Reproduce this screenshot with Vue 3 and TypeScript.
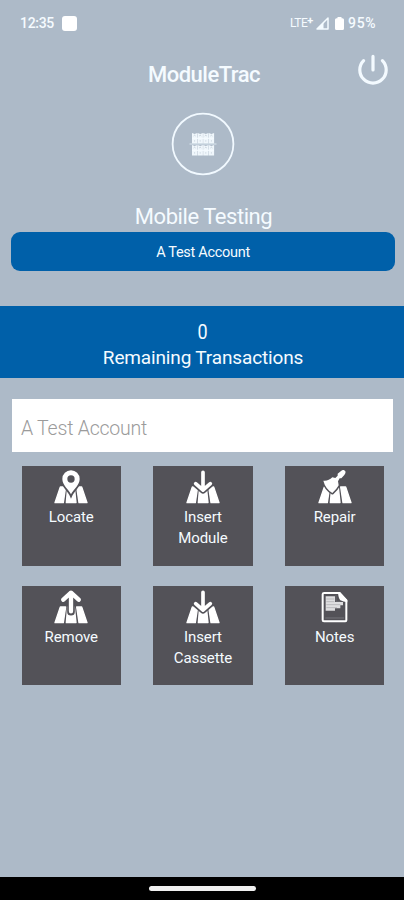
<script setup lang="ts">
type IconName = 'locate' | 'insert' | 'repair' | 'remove' | 'notes'

interface Tile {
  lines: string[]
  icon: IconName
}

const tiles: Tile[] = [
  { lines: ['Locate'], icon: 'locate' },
  { lines: ['Insert', 'Module'], icon: 'insert' },
  { lines: ['Repair'], icon: 'repair' },
  { lines: ['Remove'], icon: 'remove' },
  { lines: ['Insert', 'Cassette'], icon: 'insert' },
  { lines: ['Notes'], icon: 'notes' },
]

const rows: number[] = [0, 1]
const columns: number[] = [0, 1, 2, 3]
</script>

<template>
  <div class="screen">
    <header class="status">
      <span class="clock">12:35</span>
      <span class="square"></span>
      <span class="spacer"></span>
      <span class="lte">LTE<sup>+</sup></span>
      <svg class="signal" width="13" height="13" viewBox="0 0 13 13">
        <path d="M1 12 12 1V12Z" fill="none" stroke="#f4fbff" stroke-width="1.5" stroke-linejoin="round" />
        <path d="M1 12 7.5 5.5V12Z" fill="#f4fbff" />
      </svg>
      <svg class="battery" width="9" height="13" viewBox="0 0 9 13">
        <path d="M2.5 0H6.5V1.2H7.5Q9 1.2 9 2.7V11.5Q9 13 7.5 13H1.5Q0 13 0 11.5V2.7Q0 1.2 1.5 1.2H2.5Z" fill="#fff" />
      </svg>
      <span class="percent">95%</span>
    </header>

    <div class="titlebar">
      <h1>ModuleTrac</h1>
      <svg class="power" width="32" height="32" viewBox="0 0 32 32">
        <path d="M6.6 6.6A13.2 13.2 0 1 0 25.4 6.6M16 2.4V16" fill="none" stroke="#f3faff" stroke-width="3.2" stroke-linecap="round" />
      </svg>
    </div>

    <svg class="logo" width="64" height="64" viewBox="0 0 64 64">
      <circle cx="32" cy="32" r="30.4" fill="none" stroke="#f1f9ff" stroke-width="1.8" />
      <g v-for="r in rows" :key="r">
        <g v-for="c in columns" :key="c" :transform="`translate(${21 + c * 5.6} ${21 + r * 12})`">
          <path d="M0 0 2.6 1 5.3 0V10.4H0Z" fill="#f0f7fc" />
          <path d="M1.6 3 2.6 2.2 3.6 3" fill="none" stroke="#adbac8" stroke-width=".6" />
          <path d="M2.6 7.2V8.6" fill="none" stroke="#adbac8" stroke-width=".5" />
        </g>
        <path :d="`M21 ${26.3 + r * 12}H43`" stroke="#f5fbff" stroke-width="1.2" />
      </g>
      <path d="M18.5 32H45.5" stroke="#dae6ef" stroke-width="1" />
    </svg>

    <h2>Mobile Testing</h2>
    <button class="account">A Test Account</button>

    <section class="remaining">
      <span class="count">0</span>
      <span class="caption">Remaining Transactions</span>
    </section>

    <div class="field">A Test Account</div>

    <main class="grid">
      <button v-for="(tile, index) in tiles" :key="index" class="tile">
        <svg class="icon" width="34" height="34" viewBox="0 0 102 102">
          <g v-if="tile.icon !== 'notes'" fill="#fff" stroke="#fff" stroke-width="4" stroke-linejoin="round">
            <path d="M19 51H35L28 98H3Z" />
            <path d="M41 51H61L66 98H37Z" />
            <path d="M68 51H83L99 98H75Z" />
          </g>
          <g v-if="tile.icon === 'locate'">
            <path d="M51 73C44 58 25 46 25 27A26 26 0 0 1 77 27C77 46 58 58 51 73Z" fill="#fff" stroke="#535258" stroke-width="11" paint-order="stroke" />
            <circle cx="51" cy="27" r="11" fill="#535258" />
          </g>
          <g v-else-if="tile.icon === 'insert'" fill="none" stroke-linecap="round" stroke-linejoin="round">
            <path d="M29 42 51 61 73 42" stroke="#535258" stroke-width="20" />
            <path d="M51 7V58M29 41 51 60 73 41" stroke="#fff" stroke-width="11" />
          </g>
          <g v-else-if="tile.icon === 'remove'" fill="none" stroke-linecap="round" stroke-linejoin="round">
            <path d="M51 11V65" stroke="#535258" stroke-width="23" />
            <path d="M51 8V64M28 29 51 8 74 29" stroke="#fff" stroke-width="13" />
          </g>
          <g v-else-if="tile.icon === 'repair'" stroke-linejoin="round">
            <path d="M16 32Q31 34 43 22L52 24 59 17 59 11 70 2Q78 -3 82 4Q84 9 79 15L70 25 65 25 60 34 62 46Q56 58 43 69Q22 56 16 32Z" fill="#fff" stroke="#535258" stroke-width="9" paint-order="stroke" />
          </g>
          <g v-else>
            <path d="M16 9H65L85 31V91Q85 94 82 94H18Q14 94 14 90V13Q14 9 18 9Z" fill="#535258" stroke="#fff" stroke-width="6" />
            <path d="M60 7Q61 25 67 31Q76 36 88 37V30L65 6Z" fill="#fff" />
            <path d="M23 19H51V36H75V46H67V55H51V62H23Z" fill="#dedee0" />
            <path d="M54 16V34H67M25 27H49M25 35H49M25 44H67M25 53H57" fill="none" stroke="#88878c" stroke-width="1.3" />
            <path d="M22 84H78" stroke="#87868b" stroke-width="2" />
          </g>
        </svg>
        <span class="label">
          <span v-for="line in tile.lines" :key="line" class="line">{{ line }}</span>
        </span>
      </button>
    </main>

    <footer class="navigation"><span class="handle"></span></footer>
  </div>
</template>

<style>
body {
  background: #adbac8;
}
</style>

<style scoped>
.screen {
  box-sizing: border-box;
  width: 404px;
  height: 900px;
  display: flex;
  flex-direction: column;
  overflow: hidden;
  background: #adbac8;
  color: #f5fbff;
  font-family: Roboto, 'Liberation Sans', sans-serif;
}
h1, h2 {
  margin: 0;
}
button {
  border: 0;
  padding: 0;
  color: inherit;
  font-family: inherit;
}
svg {
  display: block;
  flex: none;
}
.status {
  display: flex;
  align-items: center;
  height: 46px;
  padding: 0 26px 0 20px;
  flex: none;
}
.clock {
  font-size: 14px;
  font-weight: 500;
  letter-spacing: -0.3px;
  width: 42px;
}
.square {
  width: 15px;
  height: 15px;
  border-radius: 3px;
  background: #fff;
}
.spacer {
  flex: 1;
}
.lte {
  font-size: 12px;
  line-height: 14px;
  letter-spacing: -0.5px;
  width: 26px;
}
.lte sup {
  font-size: 11px;
  font-weight: 700;
  line-height: 0;
  vertical-align: 3px;
}
.battery {
  margin: 0 4px 0 6px;
}
.percent {
  font-size: 14px;
  font-weight: 500;
  letter-spacing: 0.7px;
  width: 30px;
}
.titlebar {
  display: grid;
  grid-template-columns: 47px 1fr 47px;
  align-items: center;
  height: 56px;
  flex: none;
}
h1 {
  grid-column: 2;
  padding: 1px 0 0 4px;
  text-align: center;
  font-size: 22px;
  line-height: 26px;
  font-weight: 500;
  letter-spacing: -0.5px;
}
.power {
  margin-top: -8px;
}
.logo {
  margin: 10px 0 0 171px;
}
h2 {
  margin-top: 26px;
  height: 30px;
  line-height: 29px;
  font-size: 22px;
  font-weight: 400;
  text-align: center;
  letter-spacing: -0.45px;
  padding-left: 3px;
}
.account {
  flex: none;
  margin: 0 9px 0 11px;
  height: 39px;
  border-radius: 9px;
  background: #0060a9;
  font-size: 14.5px;
  line-height: 42px;
  letter-spacing: -0.3px;
}
.remaining {
  flex: none;
  margin-top: 35px;
  height: 72px;
  background: #0060a9;
  display: flex;
  flex-direction: column;
  align-items: center;
  padding: 13px 0 0 2px;
  box-sizing: border-box;
  font-size: 19px;
  line-height: 26px;
  letter-spacing: -0.15px;
}
.count {
  font-size: 20px;
  transform: scaleX(0.9);
}
.field {
  flex: none;
  box-sizing: border-box;
  margin: 21px 11px 0 12px;
  height: 53px;
  padding: 4px 9px 0;
  background: #fff;
  color: #9b9b9b;
  font-size: 19.5px;
  line-height: 52px;
  font-weight: 300;
  letter-spacing: -0.22px;
}
.grid {
  display: grid;
  grid-template-columns: repeat(3, 99.5px);
  grid-auto-rows: 99.5px;
  gap: 20px 32.2px;
  padding: 14.4px 0 0 21.5px;
}
.tile {
  display: flex;
  flex-direction: column;
  align-items: center;
  background: #535258;
  padding-top: 4px;
}
.label {
  margin-top: 3px;
  font-size: 15px;
  line-height: 21px;
  letter-spacing: -0.1px;
}
.line {
  display: block;
}
.navigation {
  flex: none;
  display: flex;
  justify-content: center;
  height: 23px;
  margin-top: auto;
  padding-top: 9px;
  box-sizing: border-box;
  background: #000;
}
.handle {
  width: 107px;
  height: 5px;
  border-radius: 3px;
  background: #f0f0f0;
}
</style>
